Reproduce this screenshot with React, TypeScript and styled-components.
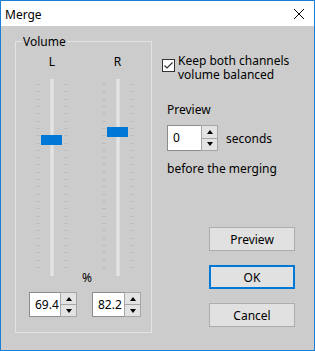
import React from "react";
import styled, { createGlobalStyle } from "styled-components";

const Global = createGlobalStyle`
  html, body { margin: 0; padding: 0; background: #cccccc; }
  body { font-family: "Noto Sans", "Open Sans", sans-serif; font-size: 12px; color: #000; }
  * { box-sizing: border-box; }
`;

const Window = styled.div`
  width: 315px;
  height: 351px;
  border: 1px solid #1a7fd4;
  background: #cccccc;
  display: flex;
  flex-direction: column;
  line-height: 15px;
`;

const TitleBar = styled.div`
  height: 25px;
  background: #ffffff;
  display: flex;
  align-items: center;
  justify-content: space-between;
  padding: 0 9px 0 4px;
  flex: none;
`;

const Title = styled.span`
  font-size: 12px;
  margin-top: 1px;
`;

const Body = styled.div`
  flex: 1;
  display: flex;
`;

const Group = styled.div`
  position: relative;
  width: 137px;
  height: 292px;
  margin: 15px 0 0 14px;
  border: 1px solid #e3e3e3;
  display: flex;
  flex-direction: column;
  padding-top: 12px;
`;

const Legend = styled.span`
  position: absolute;
  left: 6px;
  top: -8px;
  padding: 0 1px;
  background: #cccccc;
`;

const Grid = styled.div`
  display: grid;
  grid-template-columns: 48px 15px 49px;
  padding-left: 13px;
`;

const ChannelLabel = styled.div<{ $dx: number }>`
  text-align: center;
  margin-left: ${(p) => p.$dx * 2}px;
  height: 15px;
`;

const SliderBox = styled.div<{ $dx: number }>`
  position: relative;
  display: flex;
  justify-content: center;
  height: 197px;
  margin-top: 10px;
  margin-left: ${(p) => p.$dx * 2}px;
  gap: 10px;
`;

const Ticks = styled.div`
  width: 4px;
  padding: 5px 0 8px;
  display: flex;
  flex-direction: column;
  justify-content: space-between;
`;

const Tick = styled.div`
  height: 1px;
  background: #bdbdbd;
`;

const Track = styled.div`
  width: 4px;
  background: #e4e4e4;
  border-left: 1px solid #dcdcdc;
  border-right: 1px solid #dcdcdc;
`;

const Thumb = styled.div<{ $top: number }>`
  position: absolute;
  left: 50%;
  top: ${(p) => p.$top}px;
  width: 21px;
  height: 10px;
  margin-left: -11px;
  background: #0078d7;
`;

const Percent = styled.div`
  align-self: end;
  margin-bottom: -9px;
  padding-left: 5px;
`;

const SpinRow = styled.div`
  grid-column: 1 / 4;
  display: flex;
  gap: 15px;
  margin-top: 16px;
`;

const Spin = styled.div<{ $w: number; $h: number }>`
  display: flex;
  width: ${(p) => p.$w}px;
  height: ${(p) => p.$h}px;
  flex: none;
`;

const SpinField = styled.div`
  flex: 1;
  background: #ffffff;
  border: 1px solid #8c8c8c;
  border-right: none;
  padding: 4px 0 0 5px;
  line-height: 15px;
`;

const SpinButtons = styled.div`
  width: 17px;
  display: flex;
  flex-direction: column;
  border: 1px solid #a6a6a6;
  background: #a6a6a6;
  gap: 1px;
`;

const SpinButton = styled.div`
  flex: 1;
  background: #e3e3e3;
  display: flex;
  align-items: center;
  justify-content: center;
`;

const Arrow = styled.div<{ $up?: boolean }>`
  width: 0;
  height: 0;
  border-left: 3.5px solid transparent;
  border-right: 3.5px solid transparent;
  ${(p) =>
    p.$up ? "border-bottom: 4px solid #000;" : "border-top: 4px solid #000;"}
`;

const Right = styled.div`
  flex: 1;
  display: flex;
  flex-direction: column;
  padding-left: 15px;
`;

const CheckRow = styled.div`
  display: flex;
  align-items: flex-start;
  margin: 27px 0 0 -5px;
  gap: 3px;
`;

const CheckText = styled.div`
  line-height: 14px;
  padding-top: 1px;
`;

const CheckBox = styled.div`
  width: 13px;
  height: 13px;
  border: 1px solid #333333;
  background: #ffffff;
  margin-top: 6px;
  display: flex;
  align-items: center;
  justify-content: center;
  flex: none;
`;

const Label = styled.div<{ $mt?: number }>`
  margin-top: ${(p) => p.$mt ?? 0}px;
`;

const InlineRow = styled.div`
  display: flex;
  align-items: center;
  gap: 8px;
  margin-top: 8px;
`;

const Buttons = styled.div`
  display: flex;
  flex-direction: column;
  align-self: flex-end;
  margin: 51px 19px 0 0;
  gap: 14px;
`;

const Button = styled.div<{ $default?: boolean }>`
  width: 86px;
  height: 24px;
  background: #e1e1e1;
  border: ${(p) => (p.$default ? "2px solid #0078d7" : "1px solid #adadad")};
  display: flex;
  align-items: center;
  justify-content: center;
`;

function Slider({ top, dx }: { top: number; dx: number }) {
  const ticks = Array.from({ length: 26 }, (_, i) => <Tick key={i} />);
  return (
    <SliderBox $dx={dx}>
      <Ticks>{ticks}</Ticks>
      <Track />
      <Ticks>{ticks}</Ticks>
      <Thumb $top={top} />
    </SliderBox>
  );
}

function SpinBox({ value, w, h }: { value: string; w: number; h: number }) {
  return (
    <Spin $w={w} $h={h}>
      <SpinField>{value}</SpinField>
      <SpinButtons>
        <SpinButton>
          <Arrow $up />
        </SpinButton>
        <SpinButton>
          <Arrow />
        </SpinButton>
      </SpinButtons>
    </Spin>
  );
}

export default function App() {
  return (
    <>
      <Global />
      <Window>
        <TitleBar>
          <Title>Merge</Title>
          <svg width="12" height="12" viewBox="0 0 12 12">
            <path d="M1 1 L11 11 M11 1 L1 11" stroke="#000" strokeWidth="1" />
          </svg>
        </TitleBar>
        <Body>
          <Group>
            <Legend>Volume</Legend>
            <Grid>
              <ChannelLabel $dx={-1}>L</ChannelLabel>
              <div />
              <ChannelLabel $dx={1}>R</ChannelLabel>
              <Slider top={56} dx={-1} />
              <Percent>%</Percent>
              <Slider top={48} dx={1} />
              <SpinRow>
                <SpinBox value="69.4" w={48} h={25} />
                <SpinBox value="82.2" w={49} h={25} />
              </SpinRow>
            </Grid>
          </Group>
          <Right>
            <CheckRow>
              <CheckBox>
                <svg width="11" height="11" viewBox="0 0 11 11">
                  <path d="M1.5 5.5 L4 8 L9.5 2.5" stroke="#333" strokeWidth="1.2" fill="none" />
                </svg>
              </CheckBox>
              <CheckText>
                Keep both channels
                <br />
                volume balanced
              </CheckText>
            </CheckRow>
            <Label $mt={20}>Preview</Label>
            <InlineRow>
              <SpinBox value="0" w={51} h={26} />
              <span>seconds</span>
            </InlineRow>
            <Label $mt={10}>before the merging</Label>
            <Buttons>
              <Button>Preview</Button>
              <Button $default>OK</Button>
              <Button>Cancel</Button>
            </Buttons>
          </Right>
        </Body>
      </Window>
    </>
  );
}
